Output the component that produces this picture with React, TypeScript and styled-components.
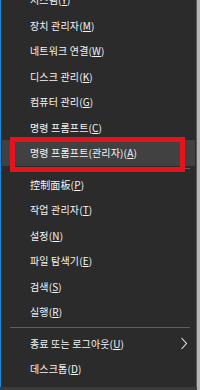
import { FunctionComponent } from 'react';
import styled, { createGlobalStyle } from 'styled-components';

const GlobalStyle = createGlobalStyle`
  html, body {
    margin: 0;
    padding: 0;
    background: #3a3a3a;
  }

  body {
    font-family: "Noto Sans CJK KR", "Noto Sans", sans-serif;
    -webkit-font-smoothing: antialiased;
  }
`;

const StyledScreen = styled.div`
  display: flex;
  width: 200px;
  height: 390px;
  overflow: hidden;
`;

const StyledMenu = styled.nav`
  display: flex;
  flex-direction: column;
  box-sizing: border-box;
  width: 197px;
  height: 387px;
  overflow: hidden;
  border-left: 1px solid #1689d6;
  border-right: 1px solid #5c5c5c;
  background: #2b2b2b;
`;

const StyledDesktop = styled.div`
  flex: 1;
  background: #b6b6b6;
`;

const StyledList = styled.ul`
  margin: -13px 0 0;
  padding: 0;
  list-style: none;
`;

const StyledItem = styled.li<{ $active?: boolean }>`
  position: relative;
  display: flex;
  align-items: center;
  justify-content: space-between;
  height: 25.5px;
  margin: 0 1px;
  padding: 0 7px 0 28px;
  font-size: 10px;
  letter-spacing: 0.15px;
  color: #f4f4f4;
  white-space: nowrap;
  background: ${({ $active }) => ($active ? '#414141' : 'transparent')};
`;

const StyledKey = styled.span`
  text-decoration: underline;
  text-underline-offset: 1px;
`;

const StyledSeparator = styled.li`
  display: flex;
  align-items: center;
  height: 6px;
  padding: 0 6px 0 9px;

  &::after {
    flex: 1;
    height: 1px;
    content: '';
    background: #5f5f5f;
  }
`;

const StyledMark = styled.div`
  position: absolute;
  top: -3.5px;
  left: 8px;
  width: 175px;
  height: 35px;
  box-sizing: border-box;
  border: 5px solid #e5141c;
  pointer-events: none;
`;

const Chevron = () => (
  <svg width="8" height="13" viewBox="0 0 8 13" fill="none">
    <path d="M1.5 1 L6.5 6.5 L1.5 12" stroke="#e8e8e8" strokeWidth="1.1" />
  </svg>
);

type Entry = {
  label: string;
  key: string;
  active?: boolean;
  submenu?: boolean;
};

const groups: Entry[][] = [
  [
    { label: '시스템', key: 'Y' },
    { label: '장치 관리자', key: 'M' },
    { label: '네트워크 연결', key: 'W' },
    { label: '디스크 관리', key: 'K' },
    { label: '컴퓨터 관리', key: 'G' },
    { label: '명령 프롬프트', key: 'C' },
    { label: '명령 프롬프트(관리자)', key: 'A', active: true },
  ],
  [
    { label: '控制面板', key: 'P' },
    { label: '작업 관리자', key: 'T' },
    { label: '설정', key: 'N' },
    { label: '파일 탐색기', key: 'E' },
    { label: '검색', key: 'S' },
    { label: '실행', key: 'R' },
  ],
  [
    { label: '종료 또는 로그아웃', key: 'U', submenu: true },
    { label: '데스크톱', key: 'D' },
  ],
];

const App: FunctionComponent = () => (
  <>
    <GlobalStyle />
    <StyledScreen>
      <StyledMenu>
        <StyledList>
          {groups.map((group, gi) => [
            gi > 0 && <StyledSeparator key={`sep-${gi}`} />,
            ...group.map((item) => (
              <StyledItem key={item.label + item.key} $active={item.active}>
                <span>
                  {item.label}
                  (
                  <StyledKey>{item.key}</StyledKey>
                  )
                </span>
                {item.submenu && <Chevron />}
                {item.active && <StyledMark />}
              </StyledItem>
            )),
          ])}
        </StyledList>
      </StyledMenu>
      <StyledDesktop />
    </StyledScreen>
  </>
);

export default App;
